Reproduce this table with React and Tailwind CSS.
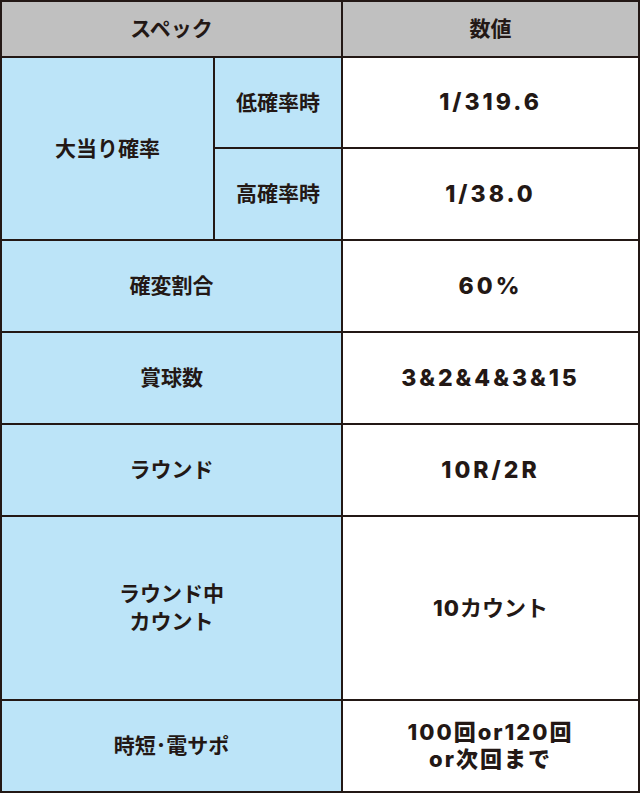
const Cell = ({ className = '', children }) => (
  <div className={`flex items-center justify-center text-center ${className}`}>
    {children}
  </div>
);

const blue = 'bg-[#bce4f8] text-[21px] leading-[28px]';
const val = 'bg-white text-[22px] leading-[27px]';

// numbers in the value column: wide heavy face with a little tracking
const Num = ({ children, track = 'text-[23px] tracking-[3px]' }) => (
  <span
    className={`${track} font-extrabold`}
    style={{ fontFamily: 'Inter, "Noto Sans CJK JP", sans-serif' }}
  >
    {children}
  </span>
);

export default function App() {
  return (
    <div
      className="w-[640px] h-[793px] bg-[#231815] p-[2px] font-bold text-[#231815]"
      style={{ fontFamily: '"Liberation Sans", "Noto Sans CJK JP", sans-serif' }}
    >
      <div className="grid h-full grid-cols-[211px_126px_1fr] grid-rows-[54px_89px_90px_90px_90px_90px_182px_90px] gap-[2px]">
        <Cell className="col-span-2 bg-[#c0c0c0] text-[21px]">スペック</Cell>
        <Cell className="bg-[#c0c0c0] text-[21px]">数値</Cell>

        <Cell className={`row-span-2 ${blue}`}>大当り確率</Cell>
        <Cell className={blue}>低確率時</Cell>
        <Cell className={val}><Num>1/319.6</Num></Cell>
        <Cell className={blue}>高確率時</Cell>
        <Cell className={val}><Num>1/38.0</Num></Cell>

        <Cell className={`col-span-2 ${blue}`}>確変割合</Cell>
        <Cell className={val}><Num>60%</Num></Cell>

        <Cell className={`col-span-2 ${blue}`}>賞球数</Cell>
        <Cell className={val}><Num>3&amp;2&amp;4&amp;3&amp;15</Num></Cell>

        <Cell className={`col-span-2 ${blue}`}>ラウンド</Cell>
        <Cell className={val}><Num>10R/2R</Num></Cell>

        <Cell className={`col-span-2 ${blue}`}>
          ラウンド中
          <br />
          カウント
        </Cell>
        <Cell className={val}>
          <Num track="tracking-[1px]">10</Num>カウント
        </Cell>

        <Cell className={`col-span-2 ${blue}`}>時短･電サポ</Cell>
        <Cell className={val}>
          <Num track="tracking-[2px]">
            100回or120回
            <br />
            or次回まで
          </Num>
        </Cell>
      </div>
    </div>
  );
}
